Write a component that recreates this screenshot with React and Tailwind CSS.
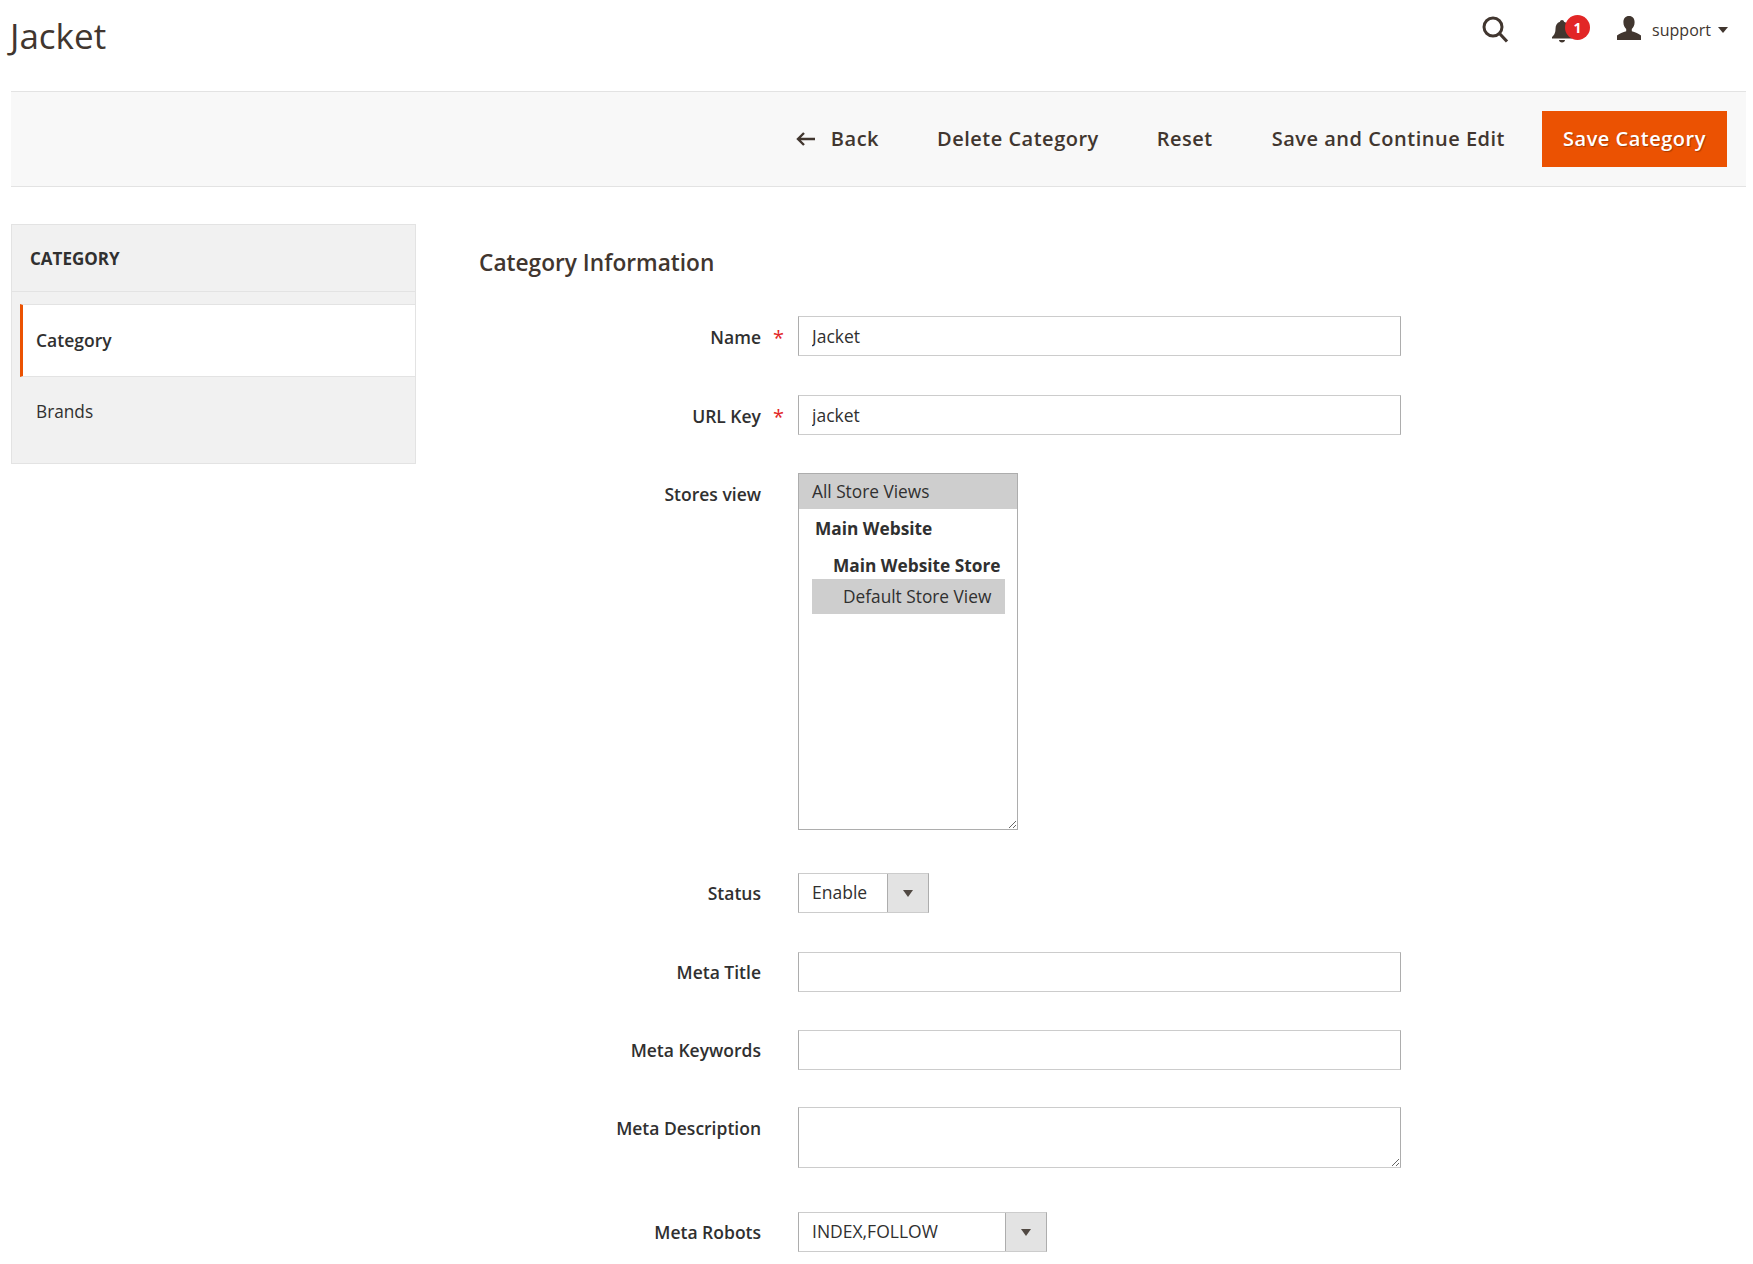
const font = 'font-["Open_Sans",sans-serif]'

function FieldLabel({ children, required }) {
  return (
    <div className="w-[345px] shrink-0 flex justify-end relative font-semibold text-[17.5px] leading-[22px] text-[#303030]">
      {children}
      {required && <span className="absolute right-[-23px] top-[11px] text-[#e22626] font-normal text-[20px]">*</span>}
    </div>
  )
}

function TextField({ label, value, required, className, labelPad = 'pt-[9px]' }) {
  return (
    <div className={`flex ${className}`}>
      <FieldLabel required={required}><span className={labelPad}>{label}</span></FieldLabel>
      <input
        readOnly
        value={value || ''}
        className="ml-[37px] w-[603px] h-[40px] border border-[#adadad] border-t-[#cccccc] border-b-[#cccccc] bg-white px-[13px] text-[17.5px] text-[#303030] outline-none"
      />
    </div>
  )
}

function SelectField({ label, value, width, className }) {
  return (
    <div className={`flex ${className}`}>
      <FieldLabel><span className="pt-[9px]">{label}</span></FieldLabel>
      <div className={`ml-[37px] h-[40px] flex border border-[#adadad] border-t-[#cccccc] border-b-[#cccccc] bg-white ${width}`}>
        <div className="flex-1 px-[13px] text-[17.5px] leading-[36px] text-[#303030]">{value}</div>
        <div className="w-[41px] border-l border-[#adadad] bg-[#e3e3e3] flex items-center justify-center">
          <span className="w-0 h-0 border-x-[5px] border-x-transparent border-t-[7px] border-t-[#514943]" />
        </div>
      </div>
    </div>
  )
}

export default function App() {
  return (
    <div className={`${font} bg-white h-[1264px] overflow-hidden text-[#303030]`}>
      {/* Top header */}
      <header className="h-[91px] flex justify-between pl-[10px] pr-[25px]">
        <h1 className="text-[35px] leading-[48px] pt-[12px] text-[#41362f] font-normal">Jacket</h1>
        <div className="flex items-start pt-[16px]">
          <svg width="28" height="28" viewBox="0 0 28 28" className="mr-[42px]" fill="none" stroke="#41362f">
            <circle cx="12" cy="11" r="9" strokeWidth="3" />
            <path d="M18.5 17.5 L26 25.5" strokeWidth="3.2" />
          </svg>
          <div className="relative w-[27px] h-[28px] mr-[38px]">
            <svg width="22" height="26" viewBox="0 0 22 26" fill="#41362f" className="absolute left-0 top-[2px]">
              <path d="M11 2c-1 0-2 .8-2 1.8C5.800 4.800 4.500 7.400 4.500 11c0 4.500-1.800 6.500-3.500 8v1.500h20V19c-1.700-1.500-3.500-3.500-3.500-8 0-3.600-1.300-6.200-4.500-7.200C13 2.800 12 2 11 2z" />
              <path d="M8 22h6c0 1.500-1.300 2.500-3 2.500S8 23.500 8 22z" />
            </svg>
            <span className="absolute left-[14px] top-[-1px] w-[25px] h-[25px] rounded-full bg-[#e22626] text-white text-[14px] font-bold leading-[25px] text-center">1</span>
          </div>
          <svg width="26" height="24" viewBox="0 0 26 24" fill="#41362f" className="mr-[10px]">
            <path d="M13 0c3.600 0 5.600 2.500 5.600 6.200 0 3-1.300 5.400-2.800 6.800v2.200c3 .9 7.200 2.500 9.200 4.300V24H1v-4.500c2-1.800 6.200-3.400 9.200-4.300V13C8.700 11.600 7.400 9.200 7.400 6.200 7.400 2.500 9.400 0 13 0z" />
          </svg>
          <span className="text-[16px] leading-[24px] pt-[2px] text-[#41362f]">support</span>
          <span className="ml-[7px] mt-[11px] w-0 h-0 border-x-[5px] border-x-transparent border-t-[6px] border-t-[#41362f]" />
        </div>
      </header>

      {/* Action bar */}
      <div className="ml-[11px] w-[1735px] h-[96px] bg-[#f8f8f8] border-y border-[#e3e3e3] flex items-center justify-end pr-[19px]">
        <div className="flex items-center font-semibold text-[20px] tracking-[0.5px] text-[#41362f]">
          <svg width="19" height="14" viewBox="0 0 19 14" fill="none" stroke="#41362f" strokeWidth="2.4" className="mr-[16px]">
            <path d="M2 7h17M8 1L2 7l6 6" />
          </svg>
          <span className="mr-[58px]">Back</span>
          <span className="mr-[58px]">Delete Category</span>
          <span className="mr-[59px]">Reset</span>
          <span className="mr-[37px]">Save and Continue Edit</span>
          <button className="w-[185px] h-[56px] bg-[#eb5202] text-white font-semibold [text-shadow:1px_1px_1px_rgba(0,0,0,0.3)]">Save Category</button>
        </div>
      </div>

      <div className="flex items-start pl-[11px] pt-[37px]">
        {/* Sidebar */}
        <aside className="w-[405px] h-[240px] shrink-0 bg-[#f1f1f1] border border-[#e3e3e3] flex flex-col">
          <div className="h-[67px] border-b border-[#e3e3e3] pl-[18px] font-bold text-[17px] leading-[68px]">CATEGORY</div>
          <div className="mt-[12px] ml-[8px] h-[73px] bg-white border-l-[3px] border-[#eb5202] border-y border-y-[#e3e3e3] pl-[13px] font-semibold text-[17.5px] leading-[70px]">Category</div>
          <div className="pl-[24px] pt-[23px] text-[17.25px] leading-[24px]">Brands</div>
        </aside>

        {/* Form */}
        <div className="flex-1">
          <h2 className="pl-[63px] pt-[23px] text-[22.7px] leading-[32px] font-semibold text-[#41362f]">Category Information</h2>
          <TextField className="mt-[37px]" label="Name" value="Jacket" required labelPad="pt-[10px]" />
          <TextField className="mt-[39px]" label="URL Key" value="jacket" required labelPad="pt-[10px]" />
          <div className="flex mt-[38px]">
            <FieldLabel><span className="pt-[10px]">Stores view</span></FieldLabel>
            <div className="ml-[37px] w-[220px] h-[357px] border border-[#adadad] bg-white resize overflow-auto text-[17.3px]">
              <div className="h-[35px] bg-[#cecece] pl-[13px] leading-[35px]">All Store Views</div>
              <div className="pl-[16px] pt-[8px] font-bold leading-[24px]">Main Website</div>
              <div className="pl-[34px] pt-[13px] font-bold leading-[24px]">Main Website Store</div>
              <div className="ml-[13px] mt-[1px] w-[193px] h-[35px] bg-[#cecece] pl-[31px] leading-[35px]">Default Store View</div>
            </div>
          </div>
          <SelectField className="mt-[43px]" label="Status" value="Enable" width="w-[131px]" />
          <TextField className="mt-[39px]" label="Meta Title" />
          <TextField className="mt-[38px]" label="Meta Keywords" />
          <div className="flex mt-[37px]">
            <FieldLabel><span className="pt-[10px]">Meta Description</span></FieldLabel>
            <textarea readOnly className="ml-[37px] w-[603px] h-[61px] border border-[#adadad] border-t-[#cccccc] border-b-[#cccccc] bg-white outline-none block" />
          </div>
          <SelectField className="mt-[44px]" label="Meta Robots" value="INDEX,FOLLOW" width="w-[249px]" />
        </div>
      </div>
    </div>
  )
}
